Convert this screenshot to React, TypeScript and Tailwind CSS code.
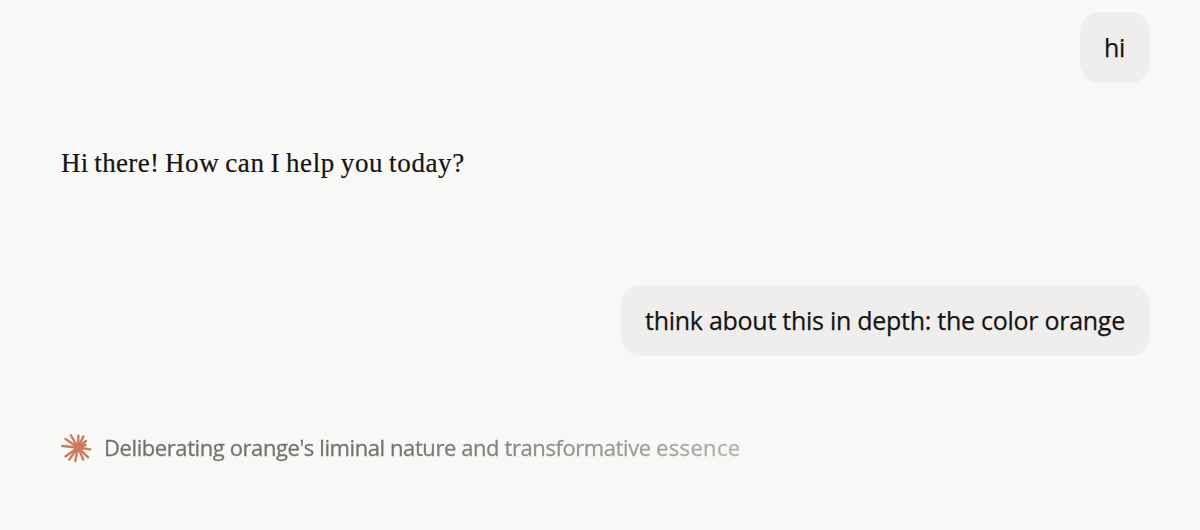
import React from "react";

const rays: [number, number][] = [
  [1.2, 13], [4.5, 6], [9.9, 2.3], [17.4, 2.6], [22.4, 3.6], [25, 8],
  [29.2, 16.4], [27, 24.4], [22.3, 26.6], [14.3, 28], [8.2, 26.6], [4.4, 23.4], [24.6, 12],
];

function Spark() {
  return (
    <svg width="31" height="30" viewBox="0 0 31 30" className="shrink-0" aria-hidden="true">
      <g stroke="#cc7b5c" strokeWidth="2.4" strokeLinecap="round">
        {rays.map(([x, y], i) => <line key={i} x1="17" y1="14.5" x2={x} y2={y} />)}
      </g>
      <circle cx="17.5" cy="14.3" r="5" fill="#cc7b5c" />
    </svg>
  );
}

export default function App() {
  return (
    <main className="flex h-[530px] w-[1200px] flex-col overflow-hidden bg-[#f8f8f6] pt-3 pr-[50.5px] pl-[61px] text-[#141413]">
      <div className="flex h-[71px] w-[70px] items-center justify-center self-end rounded-[20px] bg-[#efeeec] font-['Open_Sans',sans-serif] text-[25px] tracking-[-0.27px] [-webkit-text-stroke:0.25px_#141413]">
        <span className="whitespace-nowrap">hi</span>
      </div>
      <p className="mt-[62px] h-9 self-start whitespace-nowrap font-['Liberation_Serif',serif] text-[27px] leading-9 tracking-[0.63px] [word-spacing:-1.5px] [-webkit-text-stroke:0.2px_#141413]">
        <span className="tracking-[0.35px]">Hi there! </span>How can I help you today?
      </p>
      <div className="mt-[104px] flex h-[71px] w-[529px] items-center justify-center self-end rounded-[20px] bg-[#efeeec] font-['Open_Sans',sans-serif] text-[25px] tracking-[-0.27px] [-webkit-text-stroke:0.25px_#141413]">
        <span className="whitespace-nowrap">think about this in depth: the color orange</span>
      </div>
      <div className="mt-[77px] flex items-start gap-3">
        <Spark />
        <span className="-mt-px whitespace-nowrap bg-linear-to-r from-[#73726e] from-45% to-[#b2b1ad] bg-clip-text font-['Open_Sans',sans-serif] text-[22px] leading-[30px] tracking-[-0.41px] text-transparent [-webkit-text-stroke:0.35px_transparent]">
          Deliberating orange's liminal nature and transformative <span className="tracking-[0.35px]">essence</span>
        </span>
      </div>
    </main>
  );
}
